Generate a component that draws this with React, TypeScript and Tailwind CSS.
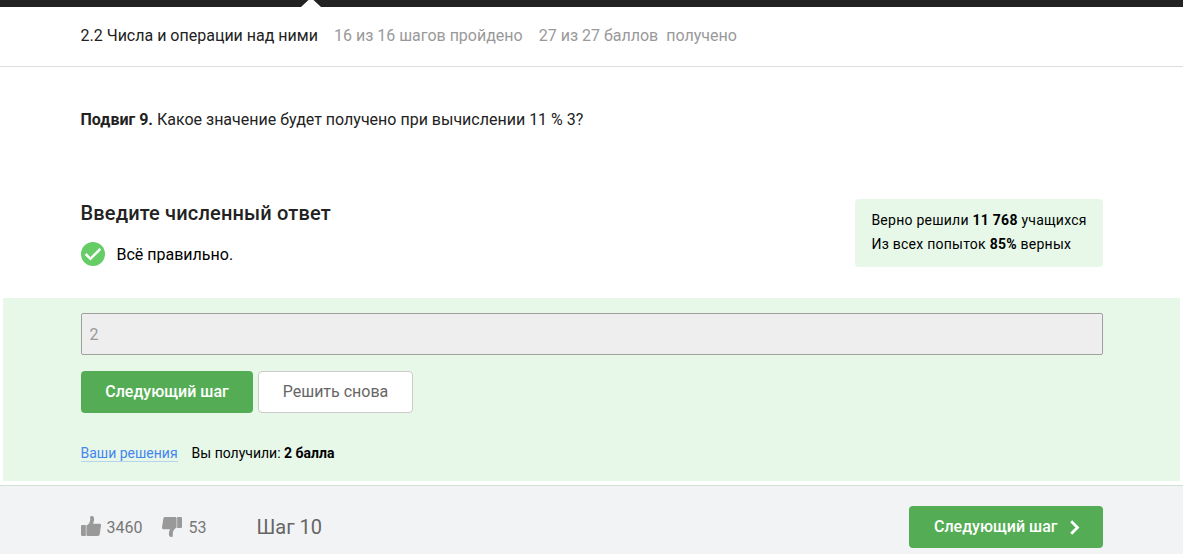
const buttonBase = "flex h-[42px] cursor-pointer items-center rounded-[4px] text-[16px] leading-6";

function Check() {
  return (
    <svg width="24" height="24" viewBox="0 0 24 24" className="shrink-0">
      <circle cx="12" cy="12" r="12" fill="#66cc66" />
      <path d="M4.6 12 9.4 16.8 19.4 6.8" fill="none" stroke="#fff" strokeWidth="2.5" />
    </svg>
  );
}

function Thumb({ down = false }: { down?: boolean }) {
  return (
    <svg
      width="20"
      height="20"
      viewBox="0 0 20 20"
      fill="#999999"
      className={down ? "shrink-0 rotate-180" : "shrink-0"}
    >
      <path d="M1.2 9H4.8V20H1.2Q0 20 0 18.8V10.2Q0 9 1.2 9Z" />
      <path d="M5.4 9.6C8 8.2 9.2 6 9.2 3.4V1C9.2.3 10 0 10.8 0C12.4 0 13.1 1.2 13.1 2.8C13.1 4.8 12.6 6.3 12 7.8H18.6C19.6 7.8 20.1 8.5 20 9.4L18.7 18.3C18.5 19.4 17.8 20 16.8 20H7.2C6.3 20 5.4 19.7 5.4 18.8Z" />
    </svg>
  );
}

export default function App() {
  return (
    <div className="flex h-[554px] w-full flex-col overflow-hidden bg-white font-['Roboto',sans-serif] text-[16px] text-[#222222]">
      <div className="h-[7px] shrink-0 bg-[#222222]">
        <svg width="20" height="7" viewBox="0 0 20 7" className="ml-[301px] block">
          <path d="M0 7 7.5 0H12.5L20 7Z" fill="#fff" />
        </svg>
      </div>

      <header className="flex h-[60px] shrink-0 gap-4 border-b border-[#dddddd] pt-[17px] pl-[80.5px] leading-6 whitespace-pre">
        <span>2.2 Числа и операции над ними</span>
        <span className="text-[#999999]">16 из 16 шагов пройдено</span>
        <span className="text-[#999999]">27 из 27 баллов{"  "}получено</span>
      </header>

      <main className="flex shrink-0 flex-col">
        <p className="mt-[41px] ml-[80.5px] leading-6">
          <b>Подвиг 9.</b> Какое значение будет получено при вычислении 11 % 3?
        </p>

        <div className="mt-[67px] flex h-[99px] items-start justify-between pr-20 pl-[80.5px]">
          <div>
            <h2 className="text-[20px] leading-7 font-medium tracking-[0.16px]">Введите численный ответ</h2>
            <div className="mt-[15px] ml-[0.5px] flex items-start gap-[11.5px] leading-6 text-black">
              <Check />
              <span className="pt-px">Всё правильно.</span>
            </div>
          </div>
          <div className="h-[68px] w-[248px] rounded-[4px] bg-[#e7f8e9] pt-[9px] pl-[16.4px] text-[14px] leading-6 tracking-[0.25px] whitespace-nowrap text-black">
            <p>Верно решили <b>11 768</b> учащихся</p>
            <p>Из всех попыток <b>85%</b> верных</p>
          </div>
        </div>

        <section className="mx-[3px] h-[183px] bg-[#e7f8e9] pt-[15px] pr-[77px] pl-[78px]">
          <div className="flex h-[42px] items-center rounded-[2px] border border-[#a0a0a0] bg-[#eeeeee] px-[7.5px] pt-[2px] text-[#999999]">2</div>
          <div className="mt-4 flex gap-[5px]">
            <button className={`${buttonBase} w-[172px] justify-center bg-[#54ad54] font-medium text-white`}>Следующий шаг</button>
            <button className={`${buttonBase} w-[155px] justify-center border border-[#cccccc] bg-white text-[#666666]`}>Решить снова</button>
          </div>
          <div className="-ml-[0.5px] mt-[32px] flex gap-[14px] text-[14px] leading-4 text-black">
            <a className="border-b border-[#b5d5ee] text-[#4486ed]">Ваши решения</a>
            <span>Вы получили: <b>2 балла</b></span>
          </div>
        </section>
      </main>

      <footer className="mt-1 flex h-[69px] shrink-0 items-start border-t border-[#d5ddd7] bg-[#f2f3f5] pr-20 pl-[81px] text-[#777777]">
        <div className="mt-[30px] flex h-6 w-[81px] items-start gap-[5.5px]">
          <Thumb />
          <span className="leading-6">3460</span>
        </div>
        <div className="mt-[31px] flex h-6 w-[94.5px] items-start gap-[6.5px]">
          <Thumb down />
          <span className="leading-[22px]">53</span>
        </div>
        <span className="mt-[27px] text-[20px] leading-7 text-[#666666]">Шаг 10</span>
        <button className={`${buttonBase} mt-5 ml-auto w-[194px] bg-[#54ad54] pl-[25px] font-medium text-white`}>
          <span>Следующий шаг</span>
          <svg width="10" height="15" viewBox="0 0 10 15" className="ml-3">
            <path d="M1.2 1.2 7.5 7.5 1.2 13.8" fill="none" stroke="#fff" strokeWidth="2.8" />
          </svg>
        </button>
      </footer>
    </div>
  );
}
